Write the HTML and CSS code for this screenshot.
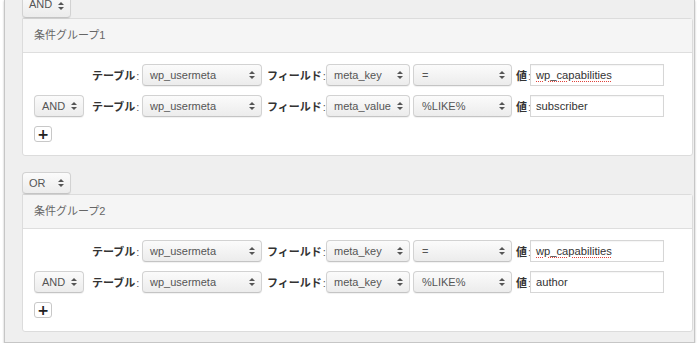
FILE: index.html
```html
<!DOCTYPE html>
<html lang="ja">

<head>
  <meta charset="UTF-8" />
  <meta name="viewport" content="width=device-width, initial-scale=1.0" />
  <title>条件グループ</title>
  <link rel="stylesheet" href="styles.css">
</head>

<body>
  <div class="frame">
    <div class="select logic-group logic-top">AND</div>

    <div class="panel">
      <div class="panel-head">条件グループ1</div>
      <div class="panel-body">
        <div class="row">
          <div class="logic-slot"></div>
          <span class="lbl lbl-table">テーブル<span class="colon">:</span></span>
          <div class="select sel-table">wp_usermeta</div>
          <span class="lbl lbl-field">フィールド<span class="colon">:</span></span>
          <div class="select sel-field">meta_key</div>
          <div class="select sel-op">=</div>
          <span class="lbl lbl-value">値<span class="colon">:</span></span>
          <div class="input"><span class="misspelled">wp_capabilities</span></div>
        </div>
        <div class="row">
          <div class="select logic-slot">AND</div>
          <span class="lbl lbl-table">テーブル<span class="colon">:</span></span>
          <div class="select sel-table">wp_usermeta</div>
          <span class="lbl lbl-field">フィールド<span class="colon">:</span></span>
          <div class="select sel-field">meta_value</div>
          <div class="select sel-op">%LIKE%</div>
          <span class="lbl lbl-value">値<span class="colon">:</span></span>
          <div class="input">subscriber</div>
        </div>
        <button class="add-btn">+</button>
      </div>
    </div>

    <div class="select logic-group group-gap">OR</div>

    <div class="panel">
      <div class="panel-head">条件グループ2</div>
      <div class="panel-body">
        <div class="row">
          <div class="logic-slot"></div>
          <span class="lbl lbl-table">テーブル<span class="colon">:</span></span>
          <div class="select sel-table">wp_usermeta</div>
          <span class="lbl lbl-field">フィールド<span class="colon">:</span></span>
          <div class="select sel-field">meta_key</div>
          <div class="select sel-op">=</div>
          <span class="lbl lbl-value">値<span class="colon">:</span></span>
          <div class="input"><span class="misspelled">wp_capabilities</span></div>
        </div>
        <div class="row">
          <div class="select logic-slot">AND</div>
          <span class="lbl lbl-table">テーブル<span class="colon">:</span></span>
          <div class="select sel-table">wp_usermeta</div>
          <span class="lbl lbl-field">フィールド<span class="colon">:</span></span>
          <div class="select sel-field">meta_key</div>
          <div class="select sel-op">%LIKE%</div>
          <span class="lbl lbl-value">値<span class="colon">:</span></span>
          <div class="input">author</div>
        </div>
        <button class="add-btn">+</button>
      </div>
    </div>
  </div>
</body>

</html>
```

FILE: styles.css
```css
* {
  box-sizing: border-box;
  margin: 0;
  padding: 0;
}

body {
  font-family: 'Liberation Sans', 'Noto Sans CJK JP', sans-serif;
  background: #fff;
  overflow: hidden;
}

.frame {
  margin: 0 5px 0 4px;
  height: 343px;
  background: #efefef;
  border: 1px solid #c6c6c6;
  border-top: 0;
  box-shadow: 0 1px 2px rgba(0, 0, 0, 0.25);
  padding-left: 17px;
  overflow: hidden;
}

/* mac style select boxes */
.select {
  position: relative;
  height: 22px;
  line-height: 20px;
  padding-left: 7px;
  font-size: 11px;
  color: #555;
  background: linear-gradient(#fbfbfb, #ececec);
  border: 1px solid #d2d2d2;
  border-bottom-color: #c4c4c4;
  border-radius: 4px;
  box-shadow: 0 1px 1px rgba(0, 0, 0, 0.06);
  white-space: nowrap;
}

.select::before,
.select::after {
  content: '';
  position: absolute;
  right: 6px;
  border-left: 3px solid transparent;
  border-right: 3px solid transparent;
}

.select::before {
  top: 6px;
  border-bottom: 3px solid #555;
}

.select::after {
  top: 11px;
  border-top: 3px solid #555;
}

.logic-group {
  width: 49px;
  padding-left: 6px;
}

/* the first one is cut off by the top edge */
.logic-top {
  height: 26px;
  line-height: 23px;
  margin-top: -8px;
}

.logic-top::before {
  top: 9px;
}

.logic-top::after {
  top: 14px;
}

.group-gap {
  margin-top: 16px;
}

.panel {
  background: #fff;
  border: 1px solid #dcdcdc;
  border-radius: 0 3px 3px 3px;
  margin-right: 1px;
}

.panel-head {
  height: 34px;
  line-height: 33px;
  padding-left: 11px;
  font-size: 11px;
  color: #666;
  background: #f5f5f5;
  border-bottom: 1px solid #dedede;
}

.panel-body {
  padding: 11px 11px 13px;
  display: flex;
  flex-direction: column;
  align-items: flex-start;
  gap: 9px;
}

.row {
  display: flex;
  align-items: center;
}

.logic-slot {
  width: 50px;
  height: 22px;
}

.lbl {
  font-size: 11px;
  font-weight: bold;
  color: #333;
  white-space: nowrap;
}

.colon {
  font-weight: normal;
  color: #555;
  margin-left: 1px;
}

.lbl-table {
  width: 58px;
  padding-left: 8px;
}

.lbl-field {
  width: 64px;
  padding-left: 5px;
}

.lbl-value {
  width: 18px;
  padding-left: 4px;
}

.sel-table {
  width: 120px;
}

.sel-field {
  width: 84px;
}

.sel-op {
  width: 99px;
  margin-left: 3px;
  padding-left: 8px;
}

.input {
  width: 134px;
  height: 22px;
  line-height: 20px;
  padding-left: 5px;
  font-size: 11.2px;
  color: #333;
  background: #fff;
  border: 1px solid #d6d6d6;
  box-shadow: inset 0 1px 1px rgba(0, 0, 0, 0.04);
}

.misspelled {
  text-decoration: underline dotted #e0443c;
  text-decoration-thickness: 1px;
  text-underline-offset: 2px;
}

.add-btn {
  width: 18px;
  height: 16px;
  font-family: 'DejaVu Sans', sans-serif;
  font-size: 14px;
  font-weight: bold;
  line-height: 13px;
  color: #222;
  background: #fff;
  border: 1px solid #c8c8c8;
  border-radius: 3px;
}
```
